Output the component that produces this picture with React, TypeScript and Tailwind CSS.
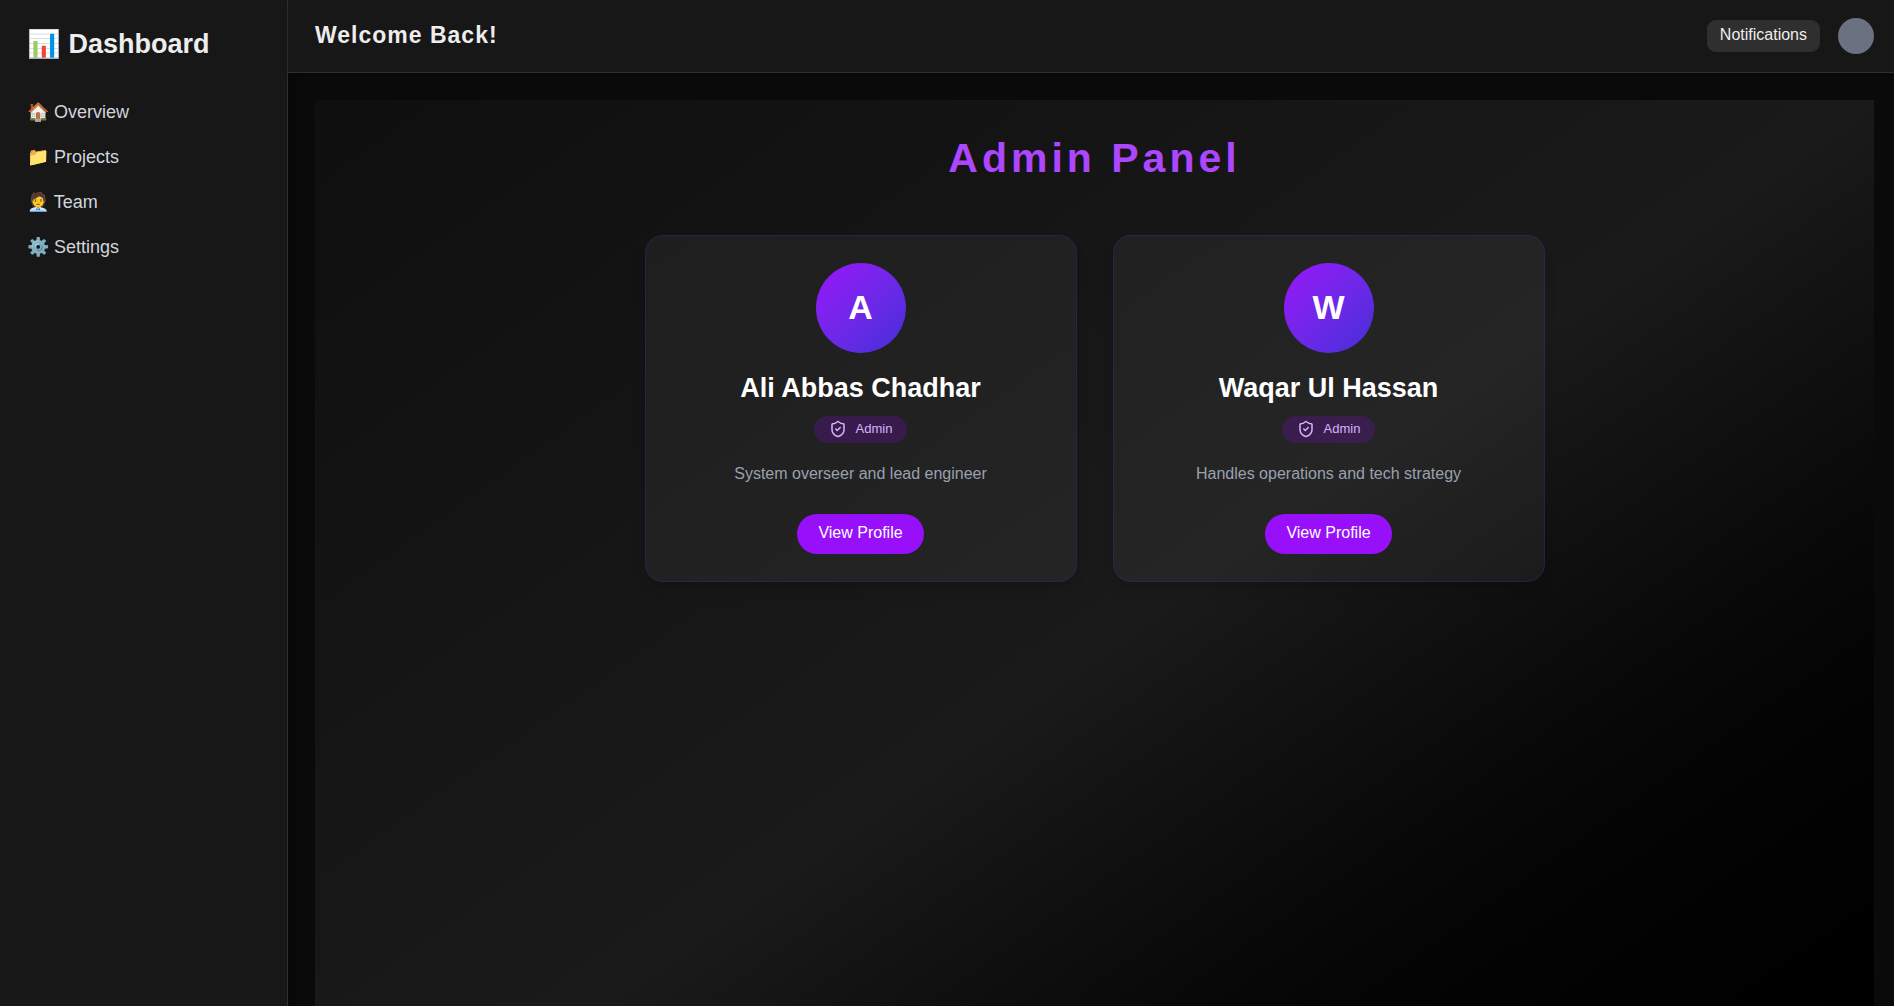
import { ShieldCheck } from "lucide-react";

const navItems = [
  { icon: "🏠", label: "Overview" },
  { icon: "📁", label: "Projects" },
  { icon: "🧑‍💼", label: "Team" },
  { icon: "⚙️", label: "Settings" },
];

const admins = [
  { name: "Ali Abbas Chadhar", role: "Admin", description: "System overseer and lead engineer" },
  { name: "Waqar Ul Hassan", role: "Admin", description: "Handles operations and tech strategy" },
];

type Admin = (typeof admins)[number];

function Sidebar() {
  return (
    <aside className="w-72 shrink-0 border-r border-[#2f2f2f] bg-[#171717] p-[27px] shadow-lg">
      <h2 className="mb-[38px] text-[27px] leading-[34px] font-bold">📊 Dashboard</h2>
      <nav className="flex flex-col gap-[18px] text-lg leading-[27px] text-gray-300">
        {navItems.map((item) => (
          <a key={item.label} href="#" className="hover:text-white">
            {item.icon} {item.label}
          </a>
        ))}
      </nav>
    </aside>
  );
}

function Header() {
  return (
    <header className="flex items-center justify-between border-b border-[#2f2f2f] bg-[#171717] py-[18px] pr-5 pl-[27px] shadow-md">
      <h1 className="pb-0.5 text-[23px] leading-8 font-semibold tracking-[1px]">Welcome Back!</h1>
      <div className="flex items-center gap-[18px]">
        <button className="rounded-[9px] bg-[#2f2f2f] px-[13px] pt-[3px] pb-[5px] text-base leading-6">
          Notifications
        </button>
        <div className="size-9 rounded-full bg-gray-500" />
      </div>
    </header>
  );
}

function AdminCard({ admin }: { admin: Admin }) {
  return (
    <article className="flex flex-col items-center rounded-[18px] border border-purple-800/30 bg-white/5 p-[27px] text-center shadow-lg">
      <div className="flex size-[90px] items-center justify-center rounded-full bg-linear-to-br from-purple-600 to-indigo-700 pb-0.5 text-[34px] leading-10 font-bold text-white">
        {admin.name[0]}
      </div>
      <h3 className="mt-[18px] mb-0.5 text-[27px] leading-[34px] font-semibold text-white">{admin.name}</h3>
      <span className="mt-[9px] flex items-center gap-[9px] rounded-full bg-purple-900/40 px-[15px] pt-[3px] pb-[5px] text-[13px] leading-[19px] text-purple-300">
        <ShieldCheck size={18} />
        {admin.role}
      </span>
      <p className="mt-[18px] text-base leading-[26px] text-gray-400">{admin.description}</p>
      <button className="mt-[27px] rounded-full bg-purple-600 px-[21px] pt-[7px] pb-[9px] text-base leading-6 text-white">
        View Profile
      </button>
    </article>
  );
}

export default function App() {
  return (
    <div className="flex h-screen overflow-hidden bg-[#0a0a0a] font-['Liberation_Sans',Arial,sans-serif] text-[#ededed]">
      <Sidebar />
      <div className="flex min-w-0 flex-1 flex-col">
        <Header />
        <main className="min-h-0 flex-1 overflow-hidden pt-[27px] pr-5 pl-[27px]">
          <section className="min-h-[110vh] bg-linear-to-br from-[#0f0f0f] via-[#1a1a1a] to-black p-9">
            <h2 className="mb-[54px] text-center text-[41px] leading-[45px] font-bold tracking-[4px] text-purple-500">
              Admin Panel
            </h2>
            <div className="mx-auto grid max-w-[900px] grid-cols-2 gap-9">
              {admins.map((admin) => (
                <AdminCard key={admin.name} admin={admin} />
              ))}
            </div>
          </section>
        </main>
      </div>
    </div>
  );
}
